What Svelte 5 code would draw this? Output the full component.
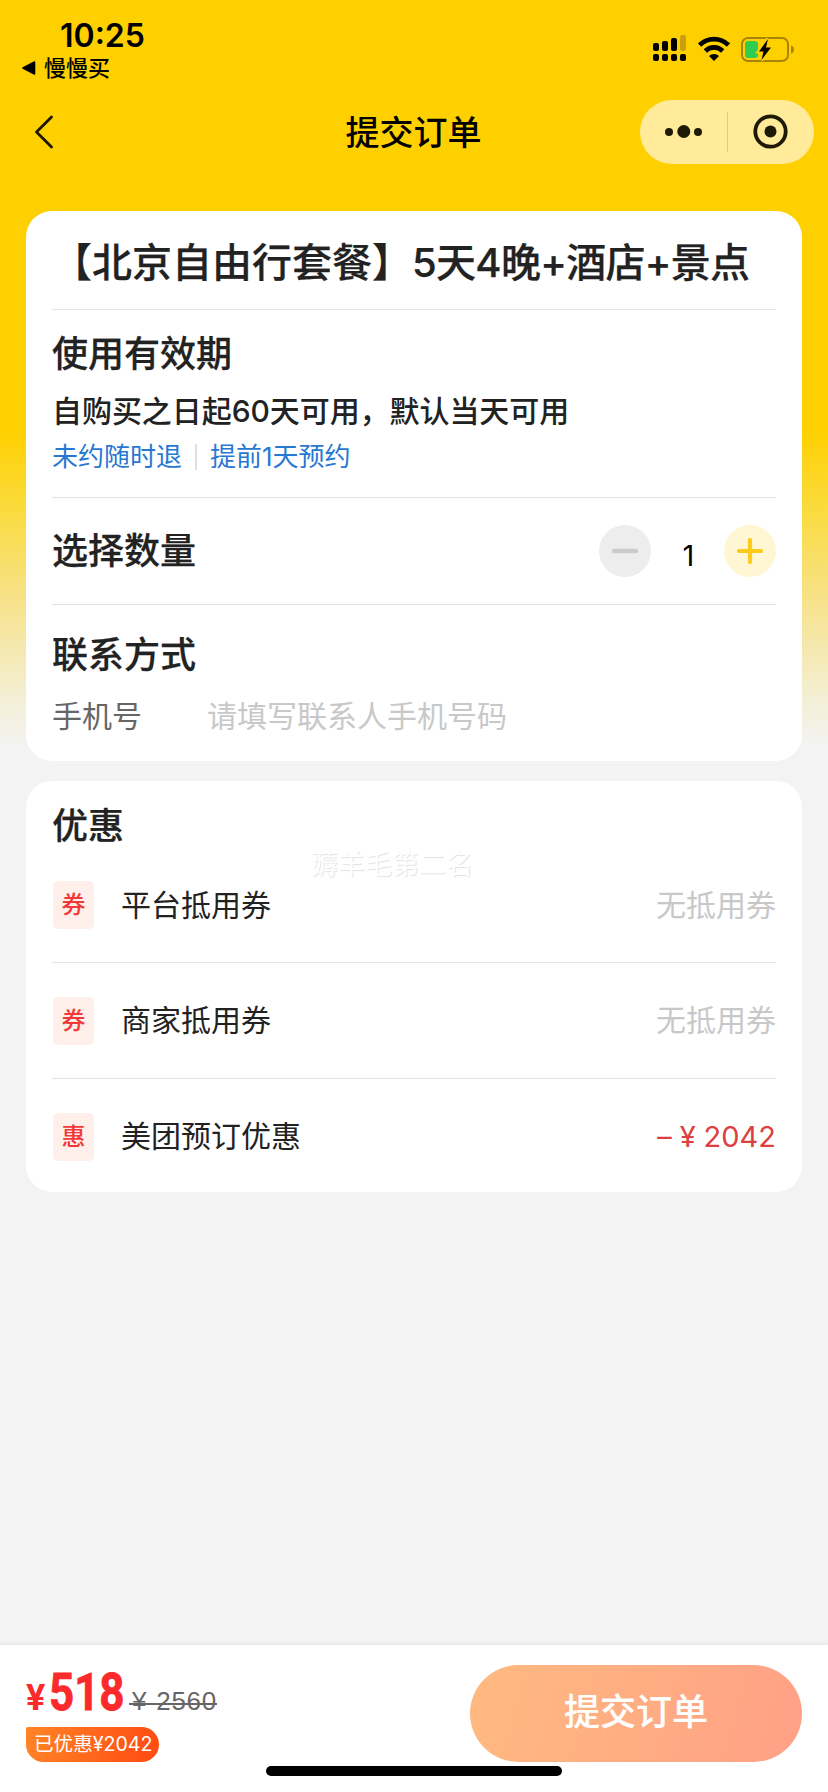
<script lang="ts">
	interface Discount {
		tag: string;
		label: string;
		value: string;
		active?: boolean;
	}

	const discounts: Discount[] = [
		{ tag: '券', label: '平台抵用券', value: '无抵用券' },
		{ tag: '券', label: '商家抵用券', value: '无抵用券' },
		{ tag: '惠', label: '美团预订优惠', value: '2042', active: true }
	];

	const price = 518;
	const originalPrice = 2560;

	let quantity = $state(1);
	let phone = $state('');

	function decrease() {
		if (quantity > 1) quantity -= 1;
	}

	function increase() {
		quantity += 1;
	}
</script>

<div class="page">
	<div class="status-bar">
		<div class="status-left">
			<div class="time">10:25</div>
			<div class="back-app">
				<svg width="14" height="14" viewBox="0 0 14 14">
					<path d="M1 7 L12.5 1 V13 Z" fill="#000" stroke="#000" stroke-width="1.6" stroke-linejoin="round" />
				</svg>
				<span>慢慢买</span>
			</div>
		</div>
		<div class="status-icons">
			<svg width="34" height="28" viewBox="0 0 34 28">
				<rect x="0" y="8" width="6" height="8" rx="2" />
				<rect x="9" y="6" width="6" height="10" rx="2" />
				<rect x="18" y="3" width="6" height="13" rx="2" />
				<rect x="27" y="0" width="6" height="16" rx="2" fill="#c9a00b" />
				<rect x="0" y="19" width="6" height="7" rx="2" />
				<rect x="9" y="19" width="6" height="7" rx="2" />
				<rect x="18" y="19" width="6" height="7" rx="2" />
				<rect x="27" y="19" width="6" height="7" rx="2" />
			</svg>
			<svg class="wifi" width="32" height="26" viewBox="0 0 32 26">
				<g fill="none" stroke="#000" stroke-width="4.6">
					<path d="M1.6 9 A20.5 20.5 0 0 1 30.4 9" />
					<path d="M7.3 15 A12.3 12.3 0 0 1 24.7 15" />
				</g>
				<path d="M16 25 L11 20 A7.2 7.2 0 0 1 21 20 Z" />
			</svg>
			<svg width="54" height="28" viewBox="0 0 54 28">
				<rect x="1" y="3" width="46" height="23" rx="6" fill="none" stroke="#a8820d" stroke-width="2" />
				<path d="M50 10.5 Q53 11.5 53 14.5 Q53 17.5 50 18.5 Z" fill="#a8820d" />
				<rect x="4" y="6" width="13" height="17" rx="3" fill="#2fcc52" />
				<path
					d="M27 4 L18 16.5 H22.5 L20.5 25 L30 12.5 H25 Z"
					stroke="#ffd000"
					stroke-width="4"
					paint-order="stroke"
				/>
			</svg>
		</div>
	</div>

	<div class="nav-bar">
		<button type="button" class="nav-back" aria-label="返回">
			<svg width="20" height="34" viewBox="0 0 20 34">
				<path
					d="M17.5 2 L2.5 17 L17.5 32"
					fill="none"
					stroke="#1c1800"
					stroke-width="2.8"
					stroke-linecap="round"
					stroke-linejoin="round"
				/>
			</svg>
		</button>
		<h1>提交订单</h1>
		<div class="capsule">
			<svg width="174" height="64" viewBox="0 0 174 64">
				<g fill="#1f1a08">
					<circle cx="29" cy="32" r="4" />
					<circle cx="43.8" cy="31.5" r="6.5" />
					<circle cx="58" cy="32" r="4" />
					<circle cx="130.5" cy="31.5" r="6" />
				</g>
				<path d="M87.5 12 V52" stroke="#dccb85" />
				<circle cx="130.5" cy="31.5" r="15.2" fill="none" stroke="#1f1a08" stroke-width="3.8" />
			</svg>
		</div>
	</div>

	<main>
		<section class="card order">
			<h2 class="title">【北京自由行套餐】<span>5天4晚+酒店+景点</span></h2>

			<div class="validity">
				<h3>使用有效期</h3>
				<p>自购买之日起60天可用，默认当天可用</p>
				<div class="rules">
					<span>未约随时退</span>
					<i class="sep"></i>
					<span>提前1天预约</span>
				</div>
			</div>

			<div class="quantity">
				<h3>选择数量</h3>
				<div class="stepper">
					<button type="button" class="minus" aria-label="减少" onclick={decrease}>
						<svg width="26" height="26" viewBox="0 0 26 26">
							<path d="M2 13 H24" stroke="#cbcbcb" stroke-width="4.4" stroke-linecap="round" />
						</svg>
					</button>
					<span class="count">{quantity}</span>
					<button type="button" class="plus" aria-label="增加" onclick={increase}>
						<svg width="26" height="26" viewBox="0 0 26 26">
							<path
								d="M2 13 H24 M13 2 V24"
								stroke="#fccb1b"
								stroke-width="4.2"
								stroke-linecap="round"
							/>
						</svg>
					</button>
				</div>
			</div>

			<div class="contact">
				<h3>联系方式</h3>
				<label>
					<span>手机号</span>
					<input type="tel" placeholder="请填写联系人手机号码" bind:value={phone} />
				</label>
			</div>
		</section>

		<section class="card discounts">
			<h3>优惠</h3>
			<div class="watermark">薅羊毛第二名</div>
			{#each discounts as item}
				<div class="discount-row">
					<span class="tag">{item.tag}</span>
					<span class="label">{item.label}</span>
					{#if item.active}
						<span class="amount"><i>–</i><i>¥</i>{item.value}</span>
					{:else}
						<span class="none">{item.value}</span>
					{/if}
				</div>
			{/each}
		</section>
	</main>

	<footer>
		<div class="total">
			<div class="prices">
				<span class="yen">¥</span>
				<span class="price">{price}</span>
				<span class="original"><i>¥</i>{originalPrice}</span>
			</div>
			<div class="saved">已优惠<span>¥{originalPrice - price}</span></div>
		</div>
		<button type="button" class="submit">提交订单</button>
		<div class="home-indicator"></div>
	</footer>
</div>

<style>
	:global(body) {
		background: #f3f3f3;
	}

	.page {
		display: flex;
		flex-direction: column;
		width: 828px;
		height: 1792px;
		overflow: hidden;
		box-sizing: border-box;
		font-family: Inter, 'Noto Sans CJK SC', sans-serif;
		color: #222;
		background: #f3f3f3 linear-gradient(#ffd000 0, #ffd000 430px, #fadb3e 510px, #f7e28a 600px, #f3efd6 700px, #f3f3f3 748px) no-repeat;
	}

	h1,
	h2,
	h3,
	p {
		margin: 0;
		font-weight: 500;
	}

	h2,
	h3 {
		-webkit-text-stroke: 0.25px currentColor;
	}

	i {
		font-style: normal;
	}

	svg {
		display: block;
	}

	button {
		padding: 0;
		border: none;
		background: none;
		font-family: inherit;
	}

	.status-bar {
		display: flex;
		justify-content: space-between;
		height: 96px;
		padding: 0 33px 0 22px;
		color: #000;
	}

	.time {
		padding: 16px 0 0 38px;
		font-size: 32px;
		font-weight: 600;
		line-height: 39px;
	}

	.back-app {
		display: flex;
		align-items: center;
		gap: 8px;
		height: 26px;
		font-size: 22px;
		font-weight: 500;
		line-height: 26px;
	}

	.status-icons {
		display: flex;
		align-items: flex-start;
		padding-top: 35px;
	}

	.wifi {
		margin: 1px 11px 0 11px;
	}

	.nav-bar {
		display: flex;
		align-items: center;
		justify-content: space-between;
		height: 72px;
		padding: 0 14px 0 34px;
	}

	.nav-back {
		width: 153px;
	}

	h1 {
		font-size: 34px;
		line-height: 49px;
		color: #000;
	}

	.capsule {
		width: 174px;
		height: 64px;
		border-radius: 32px;
		background: #ffeb99;
	}

	main {
		display: flex;
		flex: 1;
		flex-direction: column;
		gap: 20px;
		padding: 43px 26px 0;
	}

	.card {
		padding: 0 26px;
		border-radius: 26px;
		background: #fff;
	}

	.title {
		height: 99px;
		font-size: 40px;
		line-height: 104px;
		white-space: nowrap;
		border-bottom: 1px solid #e4e4e4;
		box-sizing: border-box;
	}

	.title span {
		letter-spacing: -0.7px;
	}

	h3 {
		font-size: 36px;
		line-height: 50px;
	}

	.validity {
		height: 188px;
		padding-top: 19px;
		border-bottom: 1px solid #e4e4e4;
		box-sizing: border-box;
	}

	.validity p {
		margin-top: 11px;
		font-size: 30px;
		line-height: 42px;
		letter-spacing: -0.06px;
	}

	.rules {
		display: flex;
		align-items: center;
		gap: 13px;
		margin-top: 7px;
		height: 36px;
		font-size: 26px;
		line-height: 36px;
		color: #2878d2;
	}

	.sep {
		width: 2px;
		height: 26px;
		background: #e0e0e0;
	}

	.quantity {
		display: flex;
		align-items: center;
		justify-content: space-between;
		height: 107px;
		border-bottom: 1px solid #e4e4e4;
		box-sizing: border-box;
	}

	.stepper {
		display: flex;
		align-items: center;
	}

	.stepper button {
		display: flex;
		align-items: center;
		justify-content: center;
		width: 52px;
		height: 52px;
		border-radius: 50%;
	}

	.minus {
		background: #ededed;
	}

	.plus {
		background: #fff6d4;
	}

	.count {
		width: 71px;
		padding: 9px 0 0 2px;
		font-size: 29px;
		line-height: 36px;
		text-align: center;
		color: #000;
	}

	.contact {
		height: 156px;
		padding-top: 25px;
		box-sizing: border-box;
	}

	.contact label {
		display: flex;
		align-items: center;
		margin-top: 15px;
		font-size: 30px;
		line-height: 42px;
		color: #666;
	}

	.contact label span {
		width: 155px;
	}

	.contact input {
		flex: 1;
		padding: 0;
		border: none;
		outline: none;
		background: none;
		font: inherit;
		height: 42px;
	}

	.contact input::placeholder {
		color: #c8c8c8;
	}

	.discounts {
		position: relative;
		height: 411px;
		padding-top: 20px;
		box-sizing: border-box;
	}

	.watermark {
		position: absolute;
		top: 65px;
		left: 285px;
		font-size: 27px;
		line-height: 38px;
		color: #fff;
		text-shadow: 1px 1px 1px #e2e2e2;
	}

	.discount-row {
		display: flex;
		align-items: center;
		height: 116px;
		font-size: 30px;
		line-height: 41px;
		border-bottom: 1px solid #e4e4e4;
		box-sizing: border-box;
	}

	h3 + .watermark + .discount-row {
		height: 112px;
		padding-bottom: 3px;
	}

	.discount-row:last-child {
		border-bottom: none;
		padding-bottom: 1px;
	}

	.tag {
		width: 41px;
		height: 48px;
		margin-left: 1px;
		border-radius: 5px;
		font-size: 24px;
		font-weight: 500;
		line-height: 47px;
		text-align: center;
		color: #f03a38;
		background: #feefeb;
	}

	.label {
		flex: 1;
		margin-left: 27px;
	}

	.none {
		color: #c8c8c8;
	}

	.amount {
		font-size: 29px;
		color: #dd4040;
	}

	.amount i {
		margin-right: 8px;
	}

	footer {
		position: relative;
		display: flex;
		align-items: flex-start;
		justify-content: space-between;
		height: 147px;
		padding: 20px 26px 0;
		box-sizing: border-box;
		background: #fff;
		box-shadow: 0 -1px 4px rgba(0, 0, 0, 0.08);
	}

	.prices {
		display: flex;
		align-items: baseline;
		height: 62px;
		line-height: 55px;
	}

	.yen,
	.price {
		font-family: Roboto, sans-serif;
		font-weight: 700;
		color: #fb2a2c;
	}

	.yen {
		margin-right: 4px;
		font-size: 36px;
	}

	.price {
		margin-right: -11px;
		font-size: 51px;
		transform: scaleX(0.86);
		transform-origin: left;
		-webkit-text-stroke: 0.8px #fb2a2c;
	}

	.original {
		position: relative;
		margin-left: 3px;
		padding-left: 3px;
		font-family: 'Liberation Sans', sans-serif;
		font-size: 26px;
		letter-spacing: 0.7px;
		color: #666;
	}

	.original::after {
		content: '';
		position: absolute;
		top: 29px;
		left: 0;
		right: 0;
		height: 2px;
		background: #666;
	}

	.original i {
		margin-right: 9px;
	}

	.saved {
		display: inline-block;
		height: 35px;
		padding: 0 7px 0 8px;
		border-radius: 2px 18px 18px 18px;
		font-size: 19.6px;
		line-height: 34px;
		color: #fff;
		background: linear-gradient(100deg, #ff8426, #ff4a12);
	}

	.submit {
		display: flex;
		justify-content: center;
		width: 332px;
		height: 97px;
		border-radius: 49px;
		font-size: 36px;
		font-weight: 500;
		line-height: 95px;
		color: #fff;
		background: linear-gradient(105deg, #ffba80, #ffa086);
		-webkit-text-stroke: 0.2px #fff;
	}

	.home-indicator {
		position: absolute;
		left: 266px;
		top: 121px;
		width: 296px;
		height: 10px;
		border-radius: 5px;
		background: #000;
	}
</style>
